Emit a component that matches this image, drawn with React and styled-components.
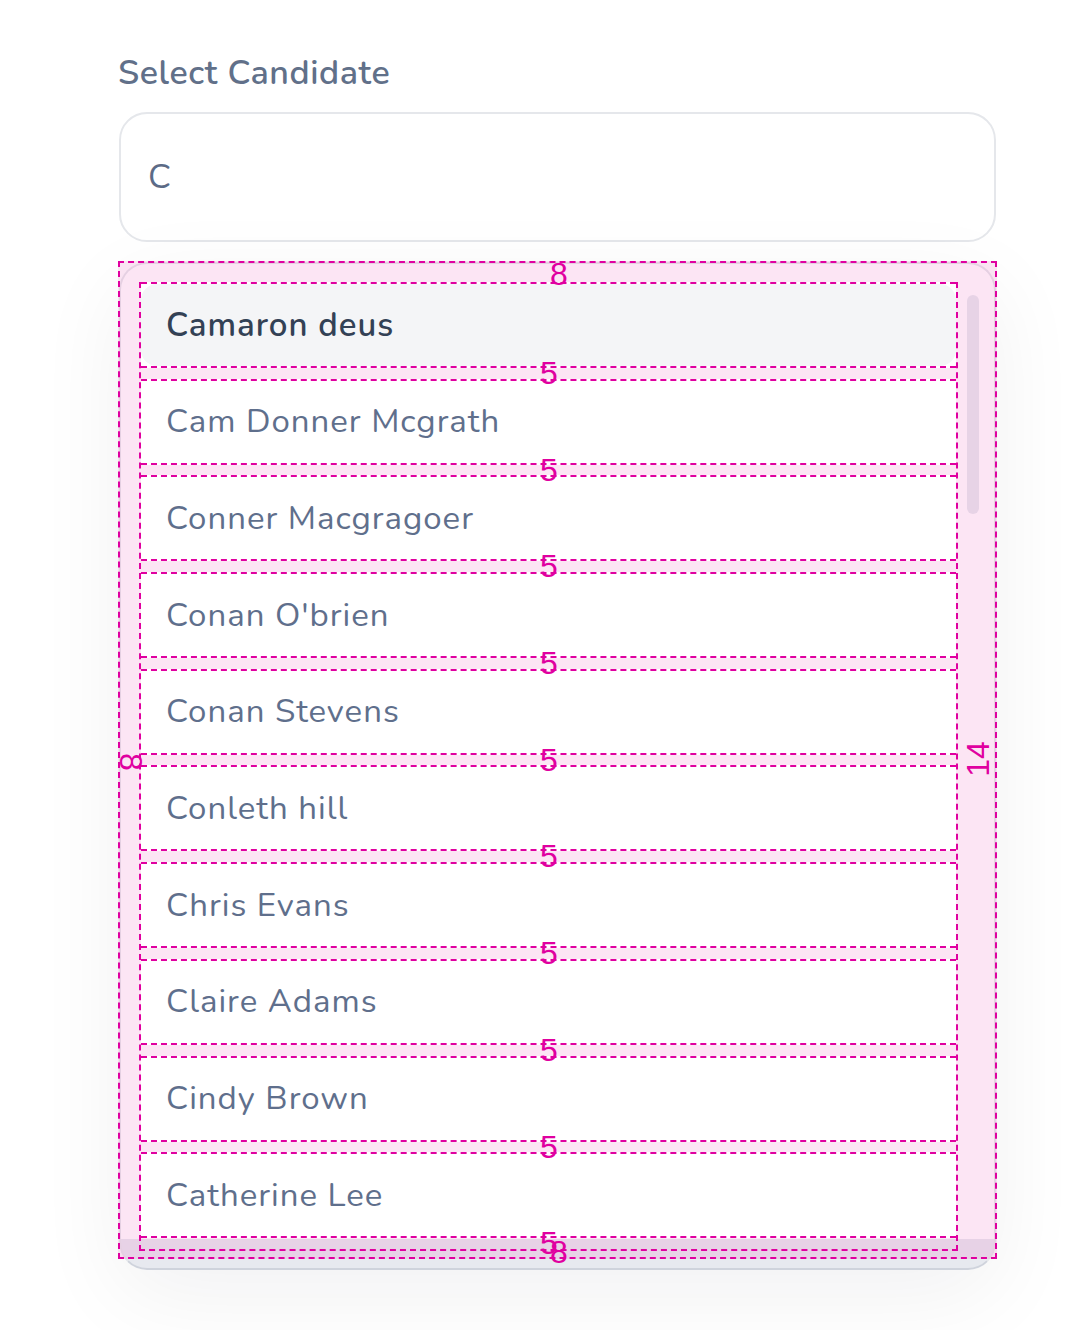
import styled, { createGlobalStyle } from "styled-components";

const candidates = [
  "Camaron deus",
  "Cam Donner Mcgrath",
  "Conner Macgragoer",
  "Conan O'brien",
  "Conan Stevens",
  "Conleth hill",
  "Chris Evans",
  "Claire Adams",
  "Cindy Brown",
  "Catherine Lee",
];

const GlobalStyle = createGlobalStyle`
  body {
    margin: 0;
    background: #ffffff;
    font-family: Nunito, Lato, "Noto Sans", sans-serif;
  }
`;

const Page = styled.div`
  padding: 52px 81px 60px 118px;
`;

const Field = styled.div`
  width: 879px;
  display: flex;
  flex-direction: column;
`;

const Label = styled.label`
  font-size: 34px;
  line-height: 42px;
  font-weight: 600;
  letter-spacing: 0.6px;
  color: #617089;
  margin-bottom: 18px;
`;

const Input = styled.div`
  box-sizing: border-box;
  height: 130px;
  margin: 0 1px;
  border: 2px solid #e5e7eb;
  border-radius: 28px;
  padding-left: 27px;
  display: flex;
  align-items: center;
  font-size: 34px;
  color: #5c6b86;
`;

const Panel = styled.div`
  margin: 20px 1px 0;
  border: 2px solid #e5e7eb;
  border-bottom-color: #cfd3dc;
  border-radius: 28px;
  padding-bottom: 9px;
  background: linear-gradient(#ffffff calc(100% - 31px), #e7e9ef 0);
  background-origin: border-box;
  box-shadow: 0 24px 90px rgba(17, 24, 39, 0.06);
`;

const pink = "#e000a0";

const List = styled.div`
  position: relative;
  margin: -3px -3px 0;
  border: 2px dashed ${pink};
  padding: 19px 37px 6px 19px;
  background: rgba(236, 72, 180, 0.14);
`;

const Rows = styled.div`
  border: 2px dashed ${pink};
  border-top: none;
  padding-bottom: 10.7px;
  display: flex;
  flex-direction: column;
  gap: 10.7px;
`;

const Option = styled.div`
  position: relative;
  box-sizing: border-box;
  height: 86px;
  border-top: 2px dashed ${pink};
  border-bottom: 2px dashed ${pink};
  background: #ffffff;
  display: flex;
`;

const OptionText = styled.div`
  flex: 1;
  display: flex;
  align-items: center;
  padding-left: 25px;
  border-radius: 16px;
  font-size: 33px;
  letter-spacing: 1px;
  font-weight: ${(p) => (p.$active ? 600 : 400)};
  color: ${(p) => (p.$active ? "#334155" : "#5f6f8c")};
  background: ${(p) => (p.$active ? "#f4f5f7" : "transparent")};
`;

const Thumb = styled.div`
  position: absolute;
  left: 847px;
  top: 32px;
  width: 12px;
  height: 219px;
  border-radius: 6px;
  background: #e7d3e6;
`;

const Measure = styled.span`
  position: absolute;
  z-index: 2;
  left: ${(p) => p.$x}px;
  top: ${(p) => p.$y}px;
  transform: translate(-50%, -50%) rotate(${(p) => p.$rot || 0}deg);
  font-family: "Liberation Sans", Arial, sans-serif;
  font-size: 32px;
  line-height: 1;
  color: ${pink};
  pointer-events: none;
`;

const GapMeasure = styled(Measure)`
  left: 408px;
  top: calc(100% + 7px);
`;

export default function App() {
  return (
    <>
      <GlobalStyle />
      <Page>
        <Field>
          <Label>Select Candidate</Label>
          <Input>C</Input>
          <Panel>
            <List>
              <Thumb />
              <Rows>
                {candidates.map((name, i) => (
                  <Option key={name}>
                    <OptionText $active={i === 0}>{name}</OptionText>
                    <GapMeasure>5</GapMeasure>
                  </Option>
                ))}
              </Rows>
              <Measure $x={439} $y={11}>8</Measure>
              <Measure $x={11} $y={499} $rot={90}>8</Measure>
              <Measure $x={858} $y={496} $rot={-90}>14</Measure>
              <Measure $x={439} $y={989}>8</Measure>
            </List>
          </Panel>
        </Field>
      </Page>
    </>
  );
}
